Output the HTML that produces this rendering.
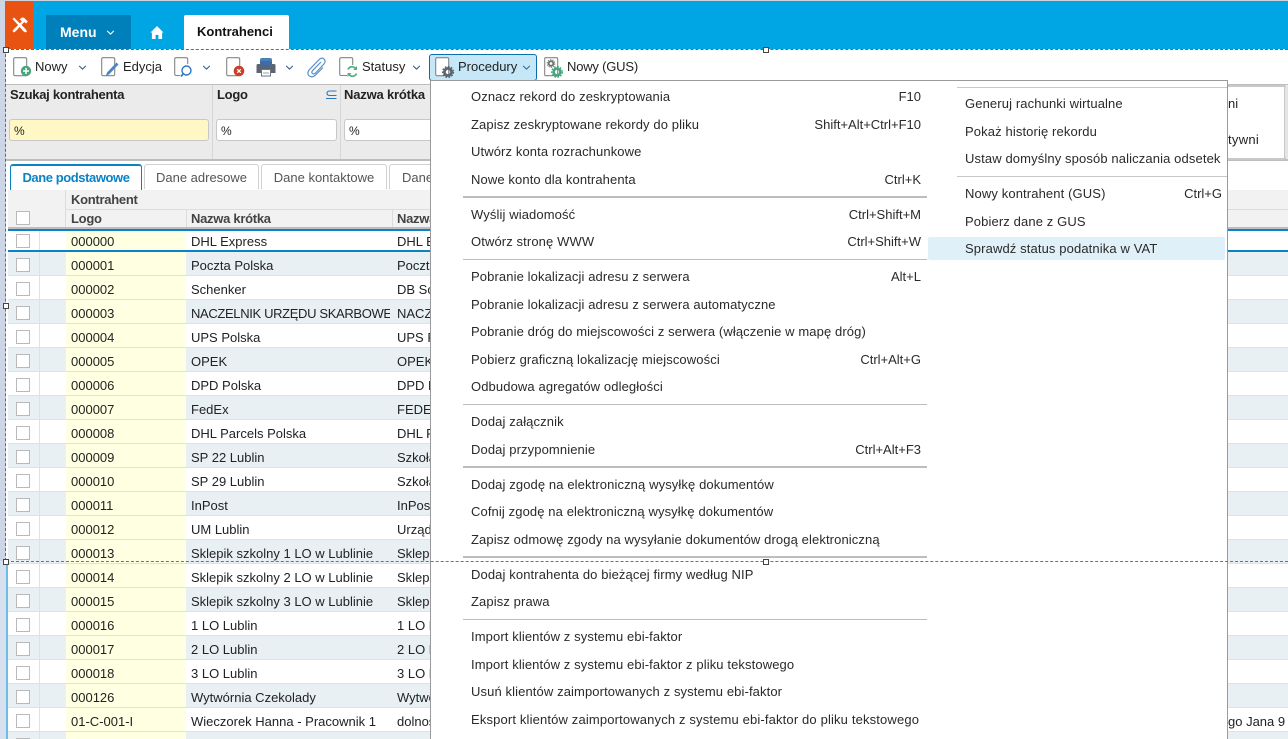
<!DOCTYPE html>
<html lang="pl"><head><meta charset="utf-8"><title>Kontrahenci</title>
<style>
html,body{margin:0;padding:0;width:1288px;height:739px;overflow:hidden;background:#fff}
body{position:relative;font:13px/16px "Liberation Sans",Arial,sans-serif;color:#222}
div,span,svg{position:absolute;display:block}
.t{white-space:nowrap;line-height:16px}
.bd{font-weight:bold}
.ls{letter-spacing:-.28px}
.hdl{width:4px;height:4px;background:#fff;border:1px solid #444;z-index:30}
.r{left:8px;width:1280px;height:24px;background:#fff;border-bottom:1px solid #d8e3ec;box-sizing:border-box;overflow:hidden}
.r.z{background:#e9f0f4}
.r u{position:absolute;left:8px;top:6px;width:12px;height:12px;border:1px solid #b9b9b9;background:#fff}
.r s{position:absolute;left:31px;top:0;width:1px;height:24px;background:#d6e3f1}
.r em,.r b,.r i{position:absolute;top:6px;font-style:normal;font-weight:normal;white-space:nowrap;line-height:16px;overflow:hidden}
.r em{left:58px;top:0;width:120px;height:23px;background:#ffffe2}
.r em span{left:5px;top:6px;white-space:nowrap}
.r b{left:183px;width:199px}
.r i{left:389px;width:120px}
.m{left:471px;white-space:nowrap;line-height:16px;color:#2a2a2a;letter-spacing:.11px}
.k{right:367px;white-space:nowrap;line-height:16px;color:#2a2a2a}
.s{left:965px;white-space:nowrap;line-height:16px;color:#2a2a2a;letter-spacing:.12px}
.sp{left:463px;width:464px;height:1px;background:#bdbdbd}
.sp2{height:2px}
.tab{top:164px;height:24px;border:1px solid #d0d0d0;border-bottom:0;border-radius:3px 3px 0 0;background:#fff;color:#555;text-align:center;line-height:25px;overflow:hidden;white-space:nowrap}
.inp{top:119px;height:20px;background:#fff;border:1px solid #c8c8c8;border-radius:3px;line-height:22px;text-indent:4px;font-size:12px}
.chev{width:9px;height:5px}
</style></head><body>

<!-- page chrome -->
<div style="left:0;top:0;width:1288px;height:739px;background:#fff"></div>
<div style="left:0;top:0;width:6px;height:561px;background:#ccd6e6"></div>
<div style="left:0;top:561px;width:7px;height:178px;background:#d7e0ee"></div>
<div style="left:6px;top:561px;width:2px;height:178px;background:#6cbce6"></div>
<div style="left:0;top:0;width:1288px;height:1px;background:#cfd4dc"></div>
<div style="left:5px;top:1px;width:1283px;height:48px;background:#00a5e3"></div>
<div style="left:5px;top:1px;width:28px;height:48px;background:#e95312"></div>
<svg style="left:11px;top:16px" width="18" height="18" viewBox="0 0 18 18" fill="#fff"><path d="M1.5 3 3 1.5 9 7.5 14.5 13 16 15.5 14.5 16.5 12 15 7.500 9.500Z"/><path d="M8.500 3.500 11 1.500 13 1.800 16.800 5.500 15 7.500 13.200 6 5 15 3 16.500 1.500 15 3 13 11 5.200Z"/></svg>
<div style="left:46px;top:15px;width:85px;height:34px;background:#0080bb;border-radius:2px 2px 0 0"></div>
<div class="t bd" style="left:60px;top:24px;color:#fff;font-size:14px">Menu</div>
<svg style="left:106px;top:30px" width="9" height="5" viewBox="0 0 10 6" fill="none" stroke="#fff" stroke-width="1.300"><path d="M1 1l4 4 4-4"/></svg>
<svg style="left:150px;top:26px" width="14" height="13" viewBox="0 0 14 14" fill="#fff"><path d="M7 0 14 7H12.500V14H8.500V9.500H5.500V14H1.500V7H0Z"/></svg>
<div style="left:184px;top:15px;width:105px;height:34px;background:#fff;border-radius:2px 2px 0 0"></div>
<div class="t bd" style="left:197px;top:24px;color:#111">Kontrahenci</div>

<!-- toolbar -->
<svg style="left:13px;top:56px" width="20" height="23" viewBox="0 0 20 23"><rect x=".7" y="1.700" width="13" height="18" rx="1.500" fill="#fff" stroke="#858585" stroke-width="1.100"/><circle cx="13" cy="15" r="5.200" fill="#4aa57e"/><path d="M13 12v6M10 15h6" stroke="#fff" stroke-width="1.500"/></svg>
<div class="t" style="left:35px;top:59px">Nowy</div>
<svg style="left:78px;top:65px" class="chev" viewBox="0 0 10 6" fill="none" stroke="#2b5f8f" stroke-width="1.300"><path d="M1 1l4 4 4-4"/></svg>
<svg style="left:101px;top:56px" width="20" height="23" viewBox="0 0 20 23"><rect x=".7" y="1.700" width="13" height="18" rx="1.500" fill="#fff" stroke="#858585" stroke-width="1.100"/><path d="M15.500 6.500 17.500 8.500 8.500 18 4.700 20.500 6 16.500Z" fill="#4a86c5"/></svg>
<div class="t" style="left:123px;top:59px">Edycja</div>
<svg style="left:174px;top:56px" width="20" height="23" viewBox="0 0 20 23"><path d="M6 19.500H2.200Q.7 19.500.7 18V3.200Q.7 1.700 2.200 1.700H12.200Q13.700 1.700 13.700 3.200V8" fill="none" stroke="#858585" stroke-width="1.100"/><circle cx="12.500" cy="14.500" r="4.500" fill="none" stroke="#2b76bd" stroke-width="1.400"/><path d="M9 18 7 20.500" stroke="#2b76bd" stroke-width="1.800"/></svg>
<svg style="left:202px;top:65px" class="chev" viewBox="0 0 10 6" fill="none" stroke="#2b5f8f" stroke-width="1.300"><path d="M1 1l4 4 4-4"/></svg>
<svg style="left:226px;top:56px" width="20" height="23" viewBox="0 0 20 23"><rect x=".7" y="1.700" width="13" height="18" rx="1.500" fill="#fff" stroke="#858585" stroke-width="1.100"/><circle cx="13" cy="15" r="5.300" fill="#c8402c"/><path d="M11.200 13.200l3.600 3.600M14.800 13.200 11.200 16.800" stroke="#fff" stroke-width="1.300"/></svg>
<svg style="left:256px;top:57px" width="20" height="20" viewBox="0 0 20 20"><rect x="4" y="1" width="12" height="8" rx="2" fill="#4a7fb8"/><path d="M2 7H18Q19.500 7 19.500 8.500V16H15V13H5V16H.5V8.500Q.5 7 2 7Z" fill="#5b6470"/><rect x="4" y="4" width="12" height="4" fill="#3c6da6"/><rect x="5.500" y="12.500" width="9" height="6.500" fill="#fff" stroke="#6e7680"/><path d="M7 16h6" stroke="#8ab"/></svg>
<svg style="left:285px;top:65px" class="chev" viewBox="0 0 10 6" fill="none" stroke="#2b5f8f" stroke-width="1.300"><path d="M1 1l4 4 4-4"/></svg>
<svg style="left:306px;top:56px" width="21" height="22" viewBox="0 0 21 22" fill="none" stroke="#5b8fc7" stroke-width="1.200"><path d="M15 6 6.500 14.700Q5 16.500 6.500 17.500 8 18.500 9.500 17L18 8Q20 5.500 18.500 3.500 16.500 1 13.500 3.200L3.500 13.500Q.5 17 3 19.800 6 22 9 19.500L17 11.500"/></svg>
<svg style="left:339px;top:56px" width="20" height="23" viewBox="0 0 20 23"><path d="M8 19.500H2.200Q.7 19.500.7 18V3.200Q.7 1.700 2.200 1.700H12.200Q13.700 1.700 13.700 3.200V9" fill="none" stroke="#858585" stroke-width="1.100"/><path d="M9 13.500Q10.500 10.500 13.500 10.800 15.500 11 16.500 12.500M17.500 17.500Q16 20.500 13 20.200 11 20 10 18.500" fill="none" stroke="#4fb083" stroke-width="1.700"/><path d="M18 10v4h-4zM8.500 21v-4h4z" fill="#4fb083"/></svg>
<div class="t" style="left:362px;top:59px">Statusy</div>
<svg style="left:412px;top:65px" class="chev" viewBox="0 0 10 6" fill="none" stroke="#2b5f8f" stroke-width="1.300"><path d="M1 1l4 4 4-4"/></svg>

<div style="left:429px;top:54px;width:106px;height:25px;background:#c5e7f7;border:1px solid #0b6ea8;border-radius:3px"></div>
<svg style="left:435px;top:56px" width="21" height="23" viewBox="0 0 21 23"><rect x=".7" y="1.700" width="13" height="18" rx="1.500" fill="#fff" stroke="#858585" stroke-width="1.100"/><circle cx="13" cy="16" r="3.600" fill="none" stroke="#5d6670" stroke-width="2.800"/><circle cx="13" cy="16" r="5.500" fill="none" stroke="#5d6670" stroke-width="1.300" stroke-dasharray="1.700 1.500"/></svg>
<div class="t" style="left:458px;top:59px">Procedury</div>
<svg style="left:522px;top:65px" width="9" height="5" viewBox="0 0 10 6" fill="none" stroke="#2f6d9e" stroke-width="1.300"><path d="M1 1l4 4 4-4"/></svg>
<svg style="left:544px;top:56px" width="20" height="23" viewBox="0 0 20 23"><rect x=".7" y="1.700" width="13" height="18" rx="1" fill="#fff" stroke="#858585" stroke-width="1.100"/><circle cx="7" cy="7.500" r="2.300" fill="none" stroke="#707070" stroke-width="1.800"/><circle cx="7" cy="7.500" r="3.800" fill="none" stroke="#707070" stroke-width="1" stroke-dasharray="1.300 1.100"/><circle cx="13" cy="16" r="3.400" fill="none" stroke="#46a67c" stroke-width="2.600"/><circle cx="13" cy="16" r="5.300" fill="none" stroke="#46a67c" stroke-width="1.300" stroke-dasharray="1.700 1.400"/></svg>
<div class="t" style="left:567px;top:59px;letter-spacing:-.2px">Nowy (GUS)</div>

<!-- filter panel -->
<div style="left:6px;top:84px;width:1282px;height:74px;background:#ebebeb;border-top:1px solid #bdbdbd;border-bottom:2px solid #bdbdbd;box-sizing:content-box"></div>
<div style="left:212px;top:85px;width:1px;height:74px;background:#d6d6d6"></div>
<div style="left:340px;top:85px;width:1px;height:74px;background:#d6d6d6"></div>
<div class="t bd ls" style="left:10px;top:87px">Szukaj kontrahenta</div>
<div class="t bd ls" style="left:217px;top:87px">Logo</div>
<svg style="left:326px;top:90px" width="11" height="10" viewBox="0 0 11 10" fill="none" stroke="#2f78b7" stroke-width="1.100"><path d="M10.500 1H4Q1 1 1 3.200 1 5.500 4 5.500H10.500M0 8.500H10.500"/></svg>
<div class="t bd" style="left:344px;top:87px;letter-spacing:-.18px">Nazwa krótka</div>
<div class="inp" style="left:9px;width:198px;background:#fff8c4">%</div>
<div class="inp" style="left:216px;width:119px">%</div>
<div class="inp" style="left:344px;width:100px">%</div>
<div style="left:1226px;top:85px;width:56px;height:71px;background:#fff;border:2px solid #c8c8c8;border-radius:2px"></div>
<div style="left:1285px;top:87px;width:3px;height:70px;background:#e4e4e4"></div>
<div class="t" style="left:1228px;top:96px">ni</div>
<div class="t" style="left:1228px;top:132px;letter-spacing:.3px">tywni</div>

<!-- tabs -->
<div class="tab bd" style="left:10px;width:130px;height:25px;border:1px solid #0a82c4;border-top-width:2px;border-bottom:0;color:#0a82c4;line-height:24px;letter-spacing:-.42px">Dane podstawowe</div>
<div class="tab" style="left:144px;width:113px">Dane adresowe</div>
<div class="tab" style="left:261px;width:124px">Dane kontaktowe</div>
<div class="tab" style="left:389px;width:100px;text-align:left;text-indent:12px">Dane</div>

<!-- grid head -->
<div style="left:8px;top:190px;width:1280px;height:38px;background:#f2f2f2"></div>
<div style="left:65px;top:190px;width:1px;height:38px;background:#dcdcdc"></div>
<div style="left:66px;top:209px;width:1222px;height:1px;background:#dcdcdc"></div>
<div style="left:186px;top:210px;width:1px;height:18px;background:#dcdcdc"></div>
<div style="left:392px;top:210px;width:1px;height:18px;background:#dcdcdc"></div>
<div style="left:16px;top:211px;width:12px;height:12px;border:1px solid #b9b9b9;background:#fff"></div>
<div class="t bd ls" style="left:71px;top:192px;color:#444">Kontrahent</div>
<div class="t bd ls" style="left:71px;top:211px;color:#444">Logo</div>
<div class="t bd ls" style="left:191px;top:211px;color:#444">Nazwa krótka</div>
<div class="t bd ls" style="left:397px;top:211px;color:#444">Nazwa</div>
<div style="left:8px;top:227px;width:1280px;height:2px;background:#bdbdbd"></div>

<!-- rows -->
<div class="r" style="top:229px;height:23px;border:0"><u style="top:5px"></u><s></s><em style="top:2px;height:19px"><span style="top:3px">000000</span></em><b style="top:5px">DHL Express</b><i style="top:5px">DHL Express</i></div>
<div class="r z" style="top:252px"><u></u><s></s><em><span>000001</span></em><b>Poczta Polska</b><i>Poczta Polska</i></div>
<div class="r" style="top:276px"><u></u><s></s><em><span>000002</span></em><b>Schenker</b><i>DB Schenker</i></div>
<div class="r z" style="top:300px"><u></u><s></s><em><span>000003</span></em><b style="letter-spacing:-.35px">NACZELNIK URZĘDU SKARBOWEGO</b><i>NACZELNIK</i></div>
<div class="r" style="top:324px"><u></u><s></s><em><span>000004</span></em><b>UPS Polska</b><i>UPS Polska</i></div>
<div class="r z" style="top:348px"><u></u><s></s><em><span>000005</span></em><b>OPEK</b><i>OPEK</i></div>
<div class="r" style="top:372px"><u></u><s></s><em><span>000006</span></em><b>DPD Polska</b><i>DPD Polska</i></div>
<div class="r z" style="top:396px"><u></u><s></s><em><span>000007</span></em><b>FedEx</b><i>FEDEX</i></div>
<div class="r" style="top:420px"><u></u><s></s><em><span>000008</span></em><b>DHL Parcels Polska</b><i>DHL Parcels</i></div>
<div class="r z" style="top:444px"><u></u><s></s><em><span>000009</span></em><b>SP 22 Lublin</b><i>Szkoła</i></div>
<div class="r" style="top:468px"><u></u><s></s><em><span>000010</span></em><b>SP 29 Lublin</b><i>Szkoła</i></div>
<div class="r z" style="top:492px"><u></u><s></s><em><span>000011</span></em><b>InPost</b><i>InPost</i></div>
<div class="r" style="top:516px"><u></u><s></s><em><span>000012</span></em><b>UM Lublin</b><i>Urząd</i></div>
<div class="r z" style="top:540px"><u></u><s></s><em><span>000013</span></em><b>Sklepik szkolny 1 LO w Lublinie</b><i>Sklepik</i></div>
<div class="r" style="top:564px"><u></u><s></s><em><span>000014</span></em><b>Sklepik szkolny 2 LO w Lublinie</b><i>Sklepik</i></div>
<div class="r z" style="top:588px"><u></u><s></s><em><span>000015</span></em><b>Sklepik szkolny 3 LO w Lublinie</b><i>Sklepik</i></div>
<div class="r" style="top:612px"><u></u><s></s><em><span>000016</span></em><b>1 LO Lublin</b><i>1 LO Lublin</i></div>
<div class="r z" style="top:636px"><u></u><s></s><em><span>000017</span></em><b>2 LO Lublin</b><i>2 LO Lublin</i></div>
<div class="r" style="top:660px"><u></u><s></s><em><span>000018</span></em><b>3 LO Lublin</b><i>3 LO Lublin</i></div>
<div class="r z" style="top:684px"><u></u><s></s><em><span>000126</span></em><b>Wytwórnia Czekolady</b><i>Wytwórnia</i></div>
<div class="r" style="top:708px"><u></u><s></s><em><span>01-C-001-I</span></em><b>Wieczorek Hanna - Pracownik 1</b><i>dolnośląskie</i></div>
<div class="r z" style="top:732px"><u></u><s></s><em></em></div>
<div style="left:8px;top:229px;width:1280px;height:2px;background:#0a82c4"></div>
<div style="left:8px;top:250px;width:1280px;height:2px;background:#0a82c4"></div>
<div class="t" style="left:1228px;top:714px">go Jana 9</div>

<!-- main menu -->
<div style="left:430px;top:80px;width:796px;height:670px;background:#fff;border:1px solid #9a9a9a;box-shadow:none"></div>
<div class="m" style="top:89px">Oznacz rekord do zeskryptowania</div><div class="k" style="top:89px">F10</div>
<div class="m" style="top:117px">Zapisz zeskryptowane rekordy do pliku</div><div class="k" style="top:117px">Shift+Alt+Ctrl+F10</div>
<div class="m" style="top:144px">Utwórz konta rozrachunkowe</div>
<div class="m" style="top:172px">Nowe konto dla kontrahenta</div><div class="k" style="top:172px">Ctrl+K</div>
<div class="sp sp2" style="top:196px"></div>
<div class="m" style="top:207px">Wyślij wiadomość</div><div class="k" style="top:207px">Ctrl+Shift+M</div>
<div class="m" style="top:234px">Otwórz stronę WWW</div><div class="k" style="top:234px">Ctrl+Shift+W</div>
<div class="sp" style="top:259px"></div>
<div class="m" style="top:269px">Pobranie lokalizacji adresu z serwera</div><div class="k" style="top:269px">Alt+L</div>
<div class="m" style="top:297px">Pobranie lokalizacji adresu z serwera automatyczne</div>
<div class="m" style="top:324px">Pobranie dróg do miejscowości z serwera (włączenie w mapę dróg)</div>
<div class="m" style="top:352px">Pobierz graficzną lokalizację miejscowości</div><div class="k" style="top:352px">Ctrl+Alt+G</div>
<div class="m" style="top:379px">Odbudowa agregatów odległości</div>
<div class="sp" style="top:404px"></div>
<div class="m" style="top:414px">Dodaj załącznik</div>
<div class="m" style="top:442px">Dodaj przypomnienie</div><div class="k" style="top:442px">Ctrl+Alt+F3</div>
<div class="sp sp2" style="top:466px"></div>
<div class="m" style="top:477px">Dodaj zgodę na elektroniczną wysyłkę dokumentów</div>
<div class="m" style="top:504px">Cofnij zgodę na elektroniczną wysyłkę dokumentów</div>
<div class="m" style="top:532px">Zapisz odmowę zgody na wysyłanie dokumentów drogą elektroniczną</div>
<div class="sp sp2" style="top:556px"></div>
<div class="m" style="top:567px">Dodaj kontrahenta do bieżącej firmy według NIP</div>
<div class="m" style="top:594px">Zapisz prawa</div>
<div class="sp" style="top:619px"></div>
<div class="m" style="top:629px">Import klientów z systemu ebi-faktor</div>
<div class="m" style="top:657px">Import klientów z systemu ebi-faktor z pliku tekstowego</div>
<div class="m" style="top:684px">Usuń klientów zaimportowanych z systemu ebi-faktor</div>
<div class="m" style="top:712px;letter-spacing:.15px">Eksport klientów zaimportowanych z systemu ebi-faktor do pliku tekstowego</div>

<!-- submenu -->
<div style="left:957px;top:87px;width:270px;height:1px;background:#c8c8c8"></div>
<div class="s" style="top:96px">Generuj rachunki wirtualne</div>
<div class="s" style="top:124px">Pokaż historię rekordu</div>
<div class="s" style="top:151px">Ustaw domyślny sposób naliczania odsetek</div>
<div style="left:957px;top:176px;width:270px;height:1px;background:#c8c8c8"></div>
<div class="s" style="top:186px">Nowy kontrahent (GUS)</div>
<div class="t" style="right:66px;top:186px;color:#2a2a2a">Ctrl+G</div>
<div class="s" style="top:214px">Pobierz dane z GUS</div>
<div style="left:928px;top:237px;width:297px;height:23px;background:#dff0f9;border-radius:2px"></div>
<div class="s" style="top:241px">Sprawdź status podatnika w VAT</div>

<!-- selection frame -->
<div style="left:6px;top:49px;width:1282px;height:0;border-top:1px dashed #1b7ec2;z-index:20"></div>
<div style="left:5px;top:49px;width:0;height:512px;border-left:1px dashed #1b7ec2;z-index:20"></div>
<div style="left:6px;top:561px;width:1282px;height:0;border-top:1px dashed #3d7fb5;z-index:20"></div>
<div class="hdl" style="left:3px;top:47px"></div>
<div class="hdl" style="left:763px;top:47px"></div>
<div class="hdl" style="left:3px;top:303px"></div>
<div class="hdl" style="left:3px;top:559px"></div>
<div class="hdl" style="left:763px;top:559px"></div>
</body></html>
